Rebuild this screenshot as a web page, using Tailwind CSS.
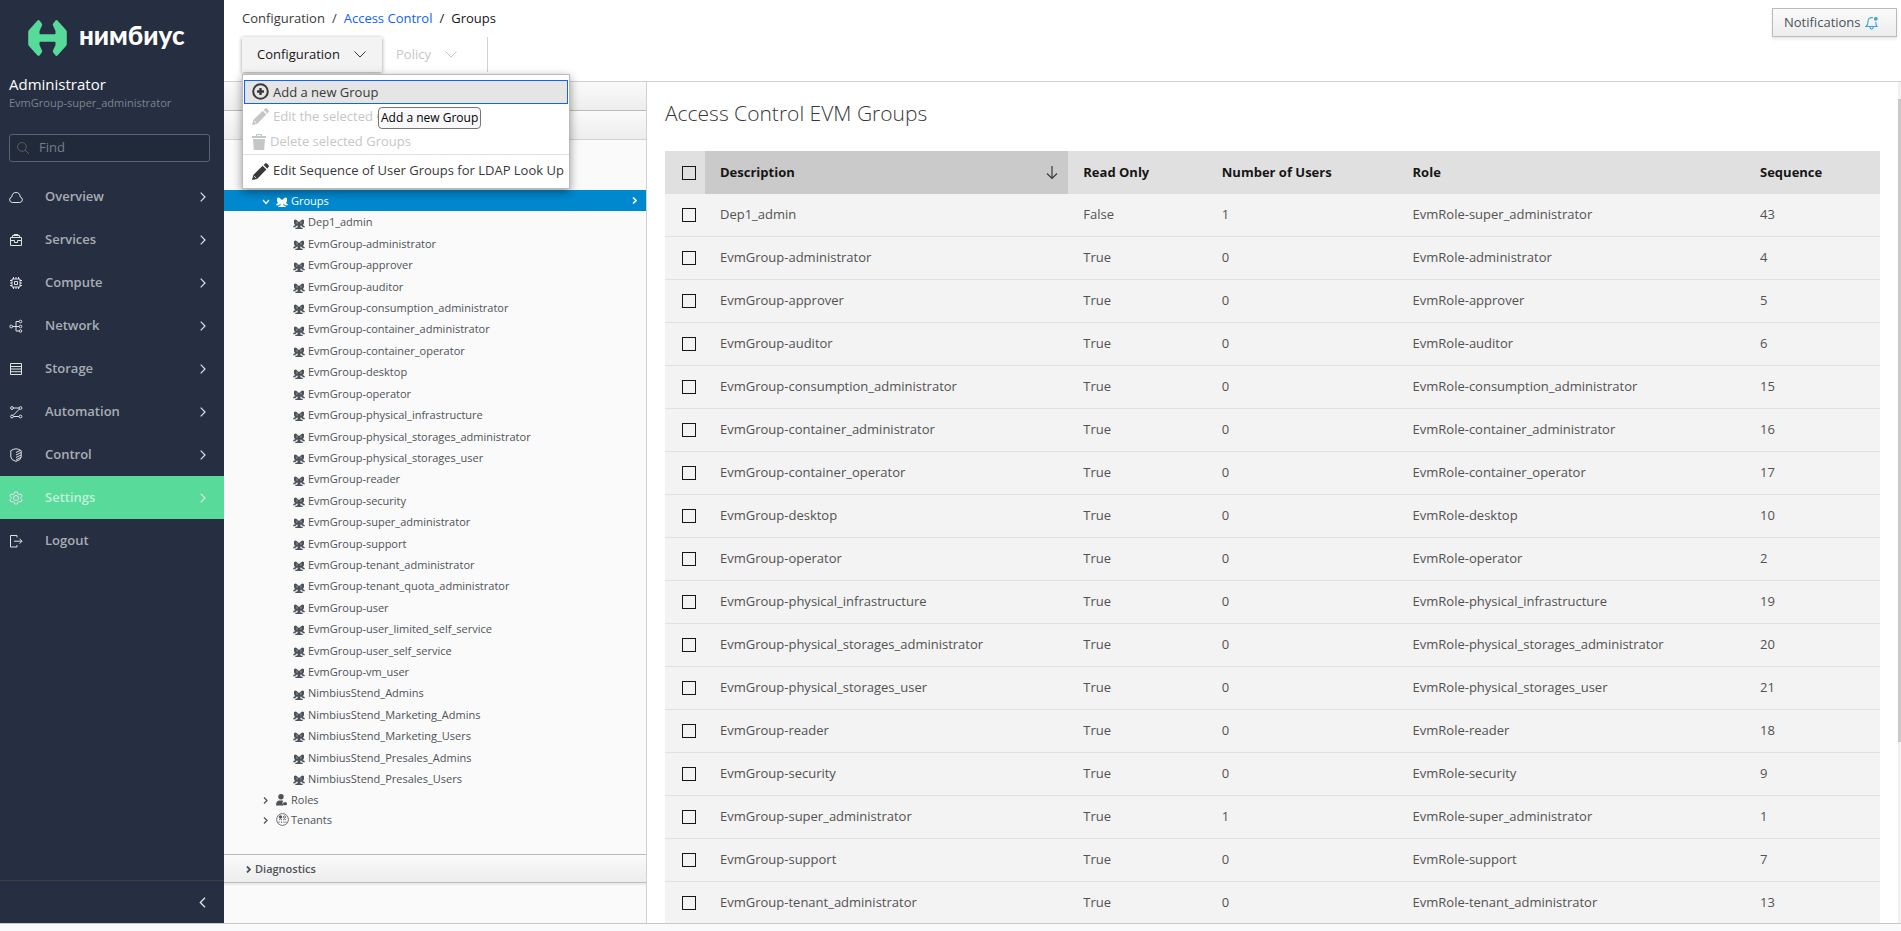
<!DOCTYPE html>
<html lang="en">
<head>
    <meta charset="UTF-8">
    <meta name="viewport" content="width=device-width, initial-scale=1.0">
    <title>Access Control EVM Groups</title>
    <script src="https://cdn.jsdelivr.net/npm/@tailwindcss/browser@4"></script>
</head>
<body class="flex h-screen flex-col bg-[#f9fafc] pb-[7px] font-['Open_Sans',sans-serif] text-[13px] text-[#4d5258]">
    <svg class="hidden">
        <symbol id="i-users" viewBox="0 0 12 10">
            <g fill="currentColor">
                <path d="M1 1.200Q2.300 0 3.600.900L6 3 8.400.900Q9.700 0 11 1.200v2.600q0 1.200-.9 1.900v.6Q12 6.800 12 8.200H9.200Q8.500 6.800 7.500 6.600h-3Q3.500 6.800 2.800 8.200H0Q0 6.800 1.900 6.300v-.6Q1 5 1 3.800z"/>
                <path d="M2 10q0-1.300 2.600-1.700V7L3.800 4.500h4.400L7.400 7v1.300Q10 8.700 10 10z"/>
            </g>
            <path d="M4 2.500v2.200M8 2.500v2.200M2.500 7.400l1.700-.3M9.500 7.400l-1.700-.3" fill="none" stroke="white" stroke-opacity=".6" stroke-width=".8"/>
        </symbol>
        <symbol id="i-pencil" viewBox="0 0 16 16">
            <path fill="currentColor" d="M0 16l1.200-4.800L10 2.700l3.500 3.500L4.800 15zM11 1.800L12.400.5q.8-.8 1.600 0l1.600 1.600q.7.800 0 1.600L14.300 5.200z"/>
            <path d="M1.700 12l2.300 2.300" stroke="white" stroke-width=".8"/>
        </symbol>
        <symbol id="i-right" viewBox="0 0 6 10">
            <path d="M.7.700L5 5 .7 9.300" fill="none" stroke="currentColor" stroke-width="1.200"/>
        </symbol>
    </svg>

    <div class="flex min-h-0 flex-1 border-b border-[#c8c8c8]">
        <!-- main navigation -->
        <nav class="flex w-56 shrink-0 flex-col bg-[#252f41]">
            <div class="flex h-[75px] items-center gap-3 pl-7">
                <svg class="h-9 w-[39px]" viewBox="0 0 39 36" fill="#57da9a">
                    <path d="M9.500.5q1-.8 2 0l2.300 3q.6 1 .2 2L11.500 11v2.500q0 .8.800.8h14.400q.8 0 .8-.8V11L25 5.500q-.4-1 .2-2l2.300-3q1-.8 2 0l8.500 9.500q.8 1 .8 2v12q0 1-.8 2l-8.500 9.500q-1 .8-2 0l-2.300-3q-.6-1-.2-2L27.500 25v-2.500q0-.8-.8-.8H12.300q-.8 0-.8.8V25l2.500 5.500q.4 1-.2 2l-2.300 3q-1 .8-2 0L1 26q-.8-1-.8-2V12q0-1 .8-2z"/>
                </svg>
                <span class="pb-1 font-[Lato] text-[26px] font-black text-white">нимбиус</span>
            </div>
            <div class="pr-[14px] pl-[9px]">
                <p class="text-[15px] leading-[18px] text-white">Administrator</p>
                <p class="text-[11px] leading-[19px] text-[#7d848f]">EvmGroup-super_administrator</p>
                <label class="mt-[22px] flex h-7 items-center gap-[10px] rounded-[3px] border border-[#596373] bg-[#202a3a] pl-[7px]">
                    <svg class="h-3 w-3 shrink-0 text-[#5c5c5c]" viewBox="0 0 12 12" fill="none" stroke="currentColor"><circle cx="4.900" cy="4.900" r="4.400"/><path d="M8 8l4 4"/></svg>
                    <input type="text" placeholder="Find" aria-label="Find" class="w-full min-w-0 bg-transparent text-[13px] outline-none placeholder:text-[#767d87]">
                </label>
            </div>
            <ul id="menu" class="mt-[13px] flex-1"></ul>
            <button class="flex h-[43px] items-center justify-end border-t border-[#3f3f42] pr-[18px] text-[#dfe2e6]" aria-label="Collapse navigation">
                <svg class="h-[11px] w-[7px] rotate-180"><use href="#i-right"/></svg>
            </button>
        </nav>

        <div class="flex min-w-0 flex-1 flex-col bg-white">
            <header class="flex h-[82px] shrink-0 justify-between border-b border-[#d1d1d1]">
                <div class="pl-[18px]">
                    <nav class="flex h-[37px] items-center gap-[7px] text-[13px] text-[#393939]" aria-label="Breadcrumb">
                        <span>Configuration</span><span>/</span>
                        <a href="#" class="text-[#0f62fe]">Access Control</a><span class="text-[#161616]">/</span>
                        <span class="text-[#161616]">Groups</span>
                    </nav>
                    <div class="flex h-[35px]">
                        <div class="relative">
                            <button class="flex h-[35px] w-[140px] items-center gap-[14px] bg-[#f3f3f3] pl-[15px] text-[13px] text-[#161616] shadow-[0_1px_4px_rgba(0,0,0,0.4)]">
                                Configuration
                                <svg class="h-[7px] w-3" viewBox="0 0 12 7" fill="none" stroke="#393939"><path d="M.5.500L6 6 11.500.5"/></svg>
                            </button>
                            <div class="absolute top-[37px] left-0 z-10 w-[328px] border border-[#bbb] bg-white pt-[5px] text-[13px] text-[#393939] shadow-[0_3px_9px_rgba(0,0,0,0.4)]" role="menu">
                                <button class="mx-px flex h-6 w-[324px] items-center gap-1 border border-[#0f62fe] bg-[#e5e5e5] pt-px pl-[7px]" role="menuitem">
                                    <svg class="mb-[3px] h-[17px] w-[17px]" viewBox="0 0 17 17" fill="none" stroke="currentColor" stroke-width="2"><circle cx="8.500" cy="8.500" r="7.300"/><path stroke-width="2.400" d="M8.500 5v7M5 8.500h7"/></svg>
                                    Add a new Group
                                </button>
                                <button class="flex h-[25px] items-center gap-1 pl-[9px] text-[#c6c6c6]" role="menuitem" disabled>
                                    <svg class="h-[17px] w-[17px]"><use href="#i-pencil"/></svg>Edit the selected Group
                                </button>
                                <button class="flex h-[25px] items-center gap-1 pl-[9px] text-[#c6c6c6]" role="menuitem" disabled>
                                    <svg class="h-4 w-[14px]" viewBox="0 0 14 16" fill="currentColor"><path d="M0 2h4V.8Q4 0 4.800 0h4.400Q10 0 10 .8V2h4v2H0zM5.200 1.100V2h3.600v-.9zM1 5h12l-.8 11H1.800z"/></svg>Delete selected Groups
                                </button>
                                <div class="h-px bg-[#e0e0e0]"></div>
                                <button class="mb-px flex h-8 items-center gap-1 pl-[9px] whitespace-nowrap" role="menuitem">
                                    <svg class="h-[17px] w-[17px]"><use href="#i-pencil"/></svg>Edit Sequence of User Groups for LDAP Look Up
                                </button>
                                <div class="absolute top-8 left-[135px] rounded border border-[#767676] bg-[#f9f9fb] px-[2px] text-[12px] leading-5 whitespace-nowrap text-black" role="tooltip">Add a new Group</div>
                            </div>
                        </div>
                        <button class="flex w-[106px] items-center gap-[14px] border-r border-[#d1d1d1] pl-[14px] text-[13px] text-[#c6c6c6]" disabled>
                            Policy
                            <svg class="h-[7px] w-3" viewBox="0 0 12 7" fill="none" stroke="currentColor"><path d="M.5.500L6 6 11.500.5"/></svg>
                        </button>
                    </div>
                </div>
                <button class="mt-2 mr-1 flex h-[29px] w-[125px] items-center gap-1 border border-[#bbb] bg-linear-to-b from-[#fafafa] to-[#ededed] pl-[11px] text-[13px] shadow-[0_2px_3px_rgba(3,3,3,0.1)]">
                    Notifications
                    <svg class="h-[14px] w-[14px]" viewBox="0 0 14 14" fill="none" stroke="#39a5dc" stroke-width="1.100"><path d="M8 1.700Q3 1 3 6q0 3-2 4.500h11Q10.800 9 10.800 6M5 11q0 2 1.600 2T8.200 11"/><circle cx="10.800" cy="2.800" r="1.900" fill="#39a5dc" stroke="none"/></svg>
                </button>
            </header>

            <div class="flex min-h-0 flex-1">
                <!-- accordion with the tree -->
                <aside class="w-[423px] shrink-0 overflow-hidden border-r border-[#d1d1d1] bg-[#fafafa] text-[11px]">
                    <div class="h-[29px] border-b border-[#bbb] bg-linear-to-b from-[#fafafa] to-[#ededed]"></div>
                    <div class="h-[29px] border-b border-[#d1d1d1] bg-linear-to-b from-[#fafafa] to-[#ededed]"></div>
                    <div class="h-[50px]"></div>
                    <div class="flex h-[21px] items-center bg-[#0088ce] pt-[2px] pr-[9px] pl-[38px] text-white">
                        <svg class="mr-[6px] h-2 w-2" viewBox="0 0 8 8" fill="none" stroke="currentColor" stroke-width="1.300"><path d="M1 2l3 3.500L7 2"/></svg>
                        <svg class="mr-[3px] h-[10px] w-3"><use href="#i-users"/></svg>
                        <span class="flex-1">Groups</span>
                        <svg class="mb-[2px] h-[7px] w-[5px]" viewBox="0 0 5 7" fill="none" stroke="currentColor" stroke-width="1.600"><path d="M1 .5l3 3-3 3"/></svg>
                    </div>
                    <div class="pt-px">
                        <ul id="tree" class="grid h-[578px] auto-rows-fr pl-[69px]"></ul>
                        <div class="flex h-5 items-center pl-[38px]">
                            <svg class="mr-2 ml-[1px] h-[7px] w-[5px]" viewBox="0 0 5 7" fill="none" stroke="currentColor" stroke-width="1.200"><path d="M1 .5l3 3-3 3"/></svg>
                            <svg class="mr-1 h-3 w-[11px]" viewBox="0 0 11 12" fill="currentColor"><circle cx="5" cy="2.700" r="2.700"/><path d="M0 11.500Q0 7 3 6.500h4Q5.500 9 7.500 11.500z"/><rect x="7" y="8.300" width="4" height="3" rx="1.400"/></svg>
                            Roles
                        </div>
                        <div class="flex h-5 items-center pl-[38px]">
                            <svg class="mr-2 ml-[1px] h-[7px] w-[5px]" viewBox="0 0 5 7" fill="none" stroke="currentColor" stroke-width="1.200"><path d="M1 .5l3 3-3 3"/></svg>
                            <svg class="mr-[2px] mb-[2px] h-[13px] w-[13px]" viewBox="0 0 13 13" fill="none" stroke="currentColor" stroke-width=".8"><circle cx="6.500" cy="6.500" r="5.900"/><circle cx="4.500" cy="4" r="1.300" fill="currentColor"/><circle cx="8.500" cy="4" r="1.100"/><path d="M3 7q1.500-2 3 0M7 7q1.500-2 3 0M3 10V8.500M5.500 10V8.500M8 10V8.500M10 10V8.500"/></svg>
                            Tenants
                        </div>
                    </div>
                    <button class="mt-6 flex h-[29px] w-full items-center gap-1 border-y border-[#bbb] bg-linear-to-b from-[#fafafa] to-[#ededed] pt-[2px] pl-[22px] font-semibold shadow-[0_2px_1px_rgba(3,3,3,0.06)]">
                        <svg class="h-[7px] w-[5px]" viewBox="0 0 5 7" fill="none" stroke="currentColor" stroke-width="1.800"><path d="M1 .5l3 3-3 3"/></svg>
                        Diagnostics
                    </button>
                </aside>

                <main class="relative min-w-0 flex-1 overflow-hidden pr-[21px] pl-[18px]">
                    <h1 class="mt-[15px] mb-[22px] text-[21px] leading-8 font-light text-[#393939]">Access Control EVM Groups</h1>
                    <table class="w-full table-fixed border-separate border-spacing-0 text-left">
                        <colgroup>
                            <col class="w-10"><col class="w-[29.9%]"><col class="w-[11.4%]"><col class="w-[15.7%]"><col class="w-[28.6%]"><col>
                        </colgroup>
                        <thead class="bg-[#e0e0e0] text-[#161616]">
                            <tr class="h-[43px]">
                                <th class="pl-[17px]"><input type="checkbox" aria-label="Select all" class="block h-[14px] w-[14px] appearance-none border border-[#161616]"></th>
                                <th class="bg-[#cacaca] pr-[10px] pl-[15px]"><div class="flex items-center justify-between">Description
                                    <svg class="h-[14px] w-3" viewBox="0 0 12 14" fill="none" stroke="#393939" stroke-width="1.200"><path d="M6 0v12.500M1 7.500l5 5 5-5"/></svg></div></th>
                                <th class="pl-[15px]">Read Only</th>
                                <th class="pl-[15px]">Number of Users</th>
                                <th class="pl-[15px]">Role</th>
                                <th class="pl-[15px]">Sequence</th>
                            </tr>
                        </thead>
                        <tbody id="rows" class="bg-[#f3f3f3] text-[#525252]"></tbody>
                    </table>
                    <div class="absolute inset-y-0 right-0 w-[3px] bg-[#f1f1f1] pt-[17px]"><div class="h-[78%] bg-[#c9c9c9]"></div></div>
                </main>
            </div>
        </div>
    </div>

    <script>
        const menu = [
            ['Overview', '<path d="M3.300 12.500a2.800 2.800 0 01-.6-5.500C3 3.800 4.600 2.500 7 2.500s4 1.300 4.300 4.500a2.800 2.800 0 01-.6 5.500z"/>'],
            ['Services', '<path d="M1.500 4.500h11v8h-11zM3.500 4.500v-2h7v2M5 2.500v-1h4v1M1.500 7.500h4M8.500 7.500h4M5.500 7.500v2h3v-2"/>'],
            ['Compute', '<path d="M3 3h8v8H3zM5.500 5.500h3v3h-3zM4.500 3V1M7 3V1M9.500 3V1M4.500 13v-2M7 13v-2M9.500 13v-2M3 4.500H1M3 7H1M3 9.500H1M13 4.500h-2M13 7h-2M13 9.500h-2"/>'],
            ['Network', '<circle cx="2.200" cy="7.500" r="1.400"/><circle cx="11.500" cy="2.500" r="1.300"/><circle cx="11.500" cy="7.500" r="1.300"/><circle cx="11.500" cy="12" r="1.300"/><path d="M3.500 7.500h6.500M10 2.500H7V12h3"/>'],
            ['Storage', '<path d="M1.500 1.500h11v11h-11zM1.500 4.500h11M1.500 7h11M1.500 9.700h11"/>'],
            ['Automation', '<circle cx="3" cy="3" r="1.400"/><circle cx="11.500" cy="3" r="1.400"/><circle cx="3" cy="11.500" r="1.400"/><circle cx="11.500" cy="11.500" r="1.400"/><path d="M4.500 3H10M10.500 4l-6.500 6.500M4.500 11.500H10"/>'],
            ['Control', '<path d="M7 .8Q4 1 1.800 2.700V9Q2 12 7 13.400 12 12 12.200 9V2.700Q10 1 7 .8zM7 4.500l4-2M7 7l5-2.500M7 9.500L12 7M7 12l5-2.800"/>'],
            ['Settings', '<circle cx="7" cy="7" r="2.500"/><path d="M5.700 1h2.600l.5 1.800 1.200.7 1.900-.5 1.300 2.200L11.800 6.500v1l1.400 1.300-1.300 2.200-1.900-.5-1.200.7L8.300 13H5.700l-.5-1.800-1.200-.7-1.900.5L.8 8.800l1.400-1.300v-1L.8 5.200 2.100 3l1.900.5 1.200-.7z"/>'],
            ['Logout', '<path d="M8 3.500v-2H1.500v11.500H8v-2M5 7.200h8M10.500 4.700L13 7.200l-2.500 2.500"/>']
        ];
        // name, read only, users, role, sequence
        const groups = [
            ['Dep1_admin', 'False', 1, 'super_administrator', 43],
            ['EvmGroup-administrator', 'True', 0, 'administrator', 4],
            ['EvmGroup-approver', 'True', 0, 'approver', 5],
            ['EvmGroup-auditor', 'True', 0, 'auditor', 6],
            ['EvmGroup-consumption_administrator', 'True', 0, 'consumption_administrator', 15],
            ['EvmGroup-container_administrator', 'True', 0, 'container_administrator', 16],
            ['EvmGroup-container_operator', 'True', 0, 'container_operator', 17],
            ['EvmGroup-desktop', 'True', 0, 'desktop', 10],
            ['EvmGroup-operator', 'True', 0, 'operator', 2],
            ['EvmGroup-physical_infrastructure', 'True', 0, 'physical_infrastructure', 19],
            ['EvmGroup-physical_storages_administrator', 'True', 0, 'physical_storages_administrator', 20],
            ['EvmGroup-physical_storages_user', 'True', 0, 'physical_storages_user', 21],
            ['EvmGroup-reader', 'True', 0, 'reader', 18],
            ['EvmGroup-security', 'True', 0, 'security', 9],
            ['EvmGroup-super_administrator', 'True', 1, 'super_administrator', 1],
            ['EvmGroup-support', 'True', 0, 'support', 7],
            ['EvmGroup-tenant_administrator', 'True', 0, 'tenant_administrator', 13]
        ];
        const moreGroups = ['EvmGroup-tenant_quota_administrator', 'EvmGroup-user', 'EvmGroup-user_limited_self_service',
            'EvmGroup-user_self_service', 'EvmGroup-vm_user', 'NimbiusStend_Admins', 'NimbiusStend_Marketing_Admins',
            'NimbiusStend_Marketing_Users', 'NimbiusStend_Presales_Admins', 'NimbiusStend_Presales_Users'];

        document.getElementById('menu').innerHTML = menu.map(([name, icon]) => `
            <li><a href="#" class="flex h-[43px] items-center pr-[18px] pl-[9px] text-[13px] font-semibold ${name === 'Settings' ? 'bg-[#57da9a] text-[#c0f2d9]' : 'text-[#a9adb4]'}">
                <svg class="mr-[22px] h-[14px] w-[14px] text-[#dfe2e6]" viewBox="0 0 14 14" fill="none" stroke="currentColor">${icon}</svg>
                <span class="flex-1">${name}</span>
                ${name === 'Logout' ? '' : '<svg class="h-[10px] w-[6px] text-[#dfe2e6]"><use href="#i-right"/></svg>'}
            </a></li>`).join('');

        document.getElementById('tree').innerHTML = [...groups.map(g => g[0]), ...moreGroups].map(name => `
            <li class="flex items-center gap-[3px]"><svg class="mt-[2px] h-[10px] w-3"><use href="#i-users"/></svg>${name}</li>`).join('');

        document.getElementById('rows').innerHTML = groups.map(([name, ro, users, role, seq]) => `
            <tr class="h-[43px] *:border-b *:border-[#e0e0e0]">
                <td class="pl-[17px]"><input type="checkbox" aria-label="Select ${name}" class="block h-[14px] w-[14px] appearance-none border border-[#161616]"></td>
                <td class="pb-px pl-[15px]">${name}</td>
                <td class="pb-px pl-[15px]">${ro}</td>
                <td class="pb-px pl-[15px]">${users}</td>
                <td class="pb-px pl-[15px]">EvmRole-${role}</td>
                <td class="pb-px pl-[15px]">${seq}</td>
            </tr>`).join('');
    </script>
</body>
</html>
